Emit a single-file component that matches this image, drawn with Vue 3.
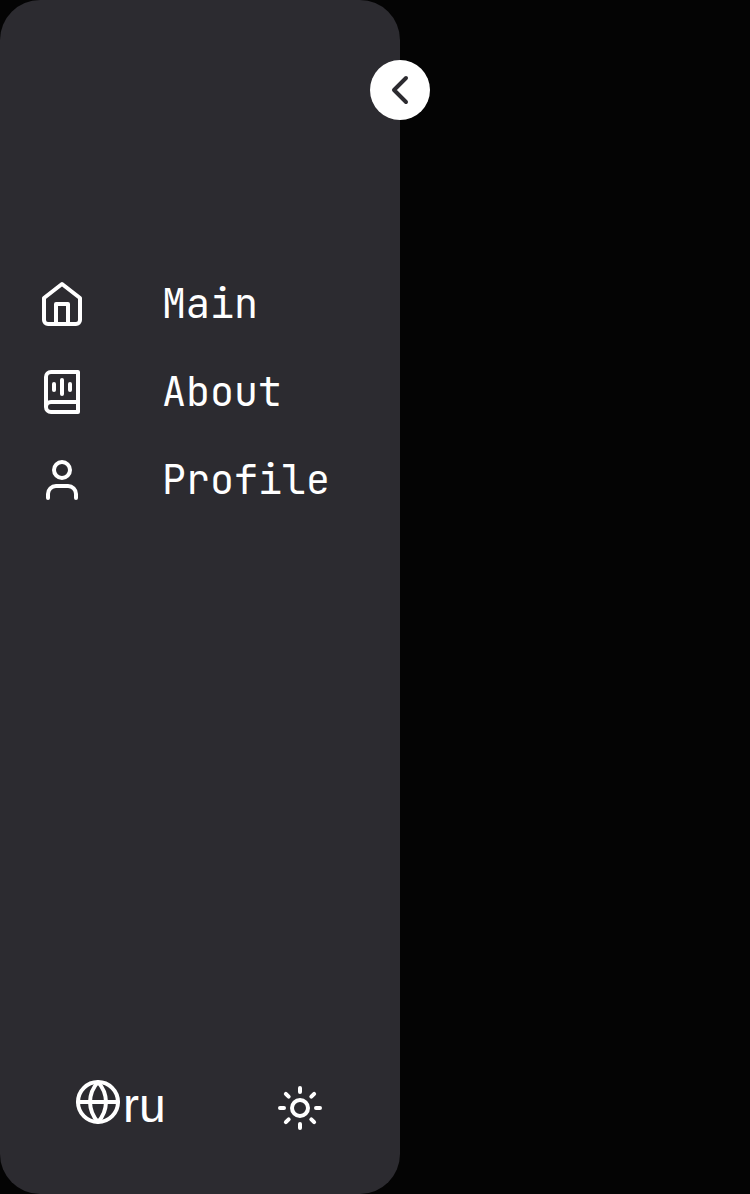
<script setup>
const links = [
  {
    label: 'Main',
    paths: ['M3 9l9-7 9 7v11a2 2 0 0 1-2 2H5a2 2 0 0 1-2-2z', 'M9 22V12h6v10'],
  },
  {
    label: 'About',
    paths: [
      'M4 19.5v-15A2.5 2.5 0 0 1 6.5 2H20v20H6.5a2.5 2.5 0 0 1 0-5H20',
      'M8 8v3',
      'M12 6v7',
      'M16 8v3',
    ],
  },
  {
    label: 'Profile',
    paths: ['M19 21v-2a4 4 0 0 0-4-4H9a4 4 0 0 0-4 4v2', 'M12 3a4 4 0 1 0 0 8a4 4 0 1 0 0-8z'],
  },
]
</script>

<template>
  <div class="page">
    <aside class="sidebar">
      <button class="toggle" aria-label="Collapse">
        <svg class="icon" viewBox="0 0 24 24"><path d="M15 18l-6-6 6-6" /></svg>
      </button>
      <nav class="nav">
        <a v-for="link in links" :key="link.label" class="link">
          <svg class="icon" viewBox="0 0 24 24">
            <path v-for="d in link.paths" :key="d" :d="d" />
          </svg>
          <span class="label">{{ link.label }}</span>
        </a>
      </nav>
      <footer class="footer">
        <button class="lang">
          <svg class="icon" viewBox="0 0 24 24">
            <circle cx="12" cy="12" r="10" />
            <path d="M2 12h20" />
            <path d="M12 2a15.3 15.3 0 0 1 4 10 15.3 15.3 0 0 1-4 10 15.3 15.3 0 0 1-4-10 15.3 15.3 0 0 1 4-10z" />
          </svg>
          <span class="code">ru</span>
        </button>
        <button class="theme" aria-label="Theme">
          <svg class="icon" viewBox="0 0 24 24">
            <circle cx="12" cy="12" r="4" />
            <path d="M12 2v2M12 20v2M4.93 4.93l1.41 1.41M17.66 17.66l1.41 1.41M2 12h2M20 12h2M6.34 17.66l-1.41 1.41M19.07 4.93l-1.41 1.41" />
          </svg>
        </button>
      </footer>
    </aside>
  </div>
</template>

<style>
body {
  background: #040404;
}
</style>

<style scoped>
.page {
  height: 1194px;
  overflow: hidden;
  background: #040404;
}
.sidebar {
  position: relative;
  display: flex;
  flex-direction: column;
  justify-content: space-between;
  box-sizing: border-box;
  width: 400px;
  height: 1194px;
  padding: 280px 38px 62px;
  border-radius: 40px;
  background: #2c2b30;
  color: #fff;
}
button {
  padding: 0;
  border: 0;
  background: none;
  color: inherit;
}
.icon {
  display: block;
  flex: none;
  width: 48px;
  height: 48px;
  fill: none;
  stroke: currentColor;
  stroke-width: 2;
  stroke-linecap: round;
  stroke-linejoin: round;
}
.toggle {
  position: absolute;
  top: 60px;
  right: -30px;
  display: flex;
  align-items: center;
  justify-content: center;
  width: 60px;
  height: 60px;
  border-radius: 50%;
  background: #fff;
  color: #2c2b30;
}
.nav {
  display: flex;
  flex-direction: column;
  gap: 40px;
}
.link {
  display: flex;
  align-items: center;
  gap: 76px;
  height: 48px;
}
.label {
  font: 40px/48px "JetBrains Mono", "DejaVu Sans Mono", monospace;
}
.footer {
  display: flex;
  justify-content: space-between;
  padding: 0 36px;
}
.lang {
  display: flex;
  height: 54px;
}
.code {
  padding: 1px 0 0 1px;
  font: 48px/54px "Liberation Sans", Arial, sans-serif;
}
.theme {
  display: flex;
  align-items: flex-start;
  padding: 6px 2px 0 0;
}
</style>
